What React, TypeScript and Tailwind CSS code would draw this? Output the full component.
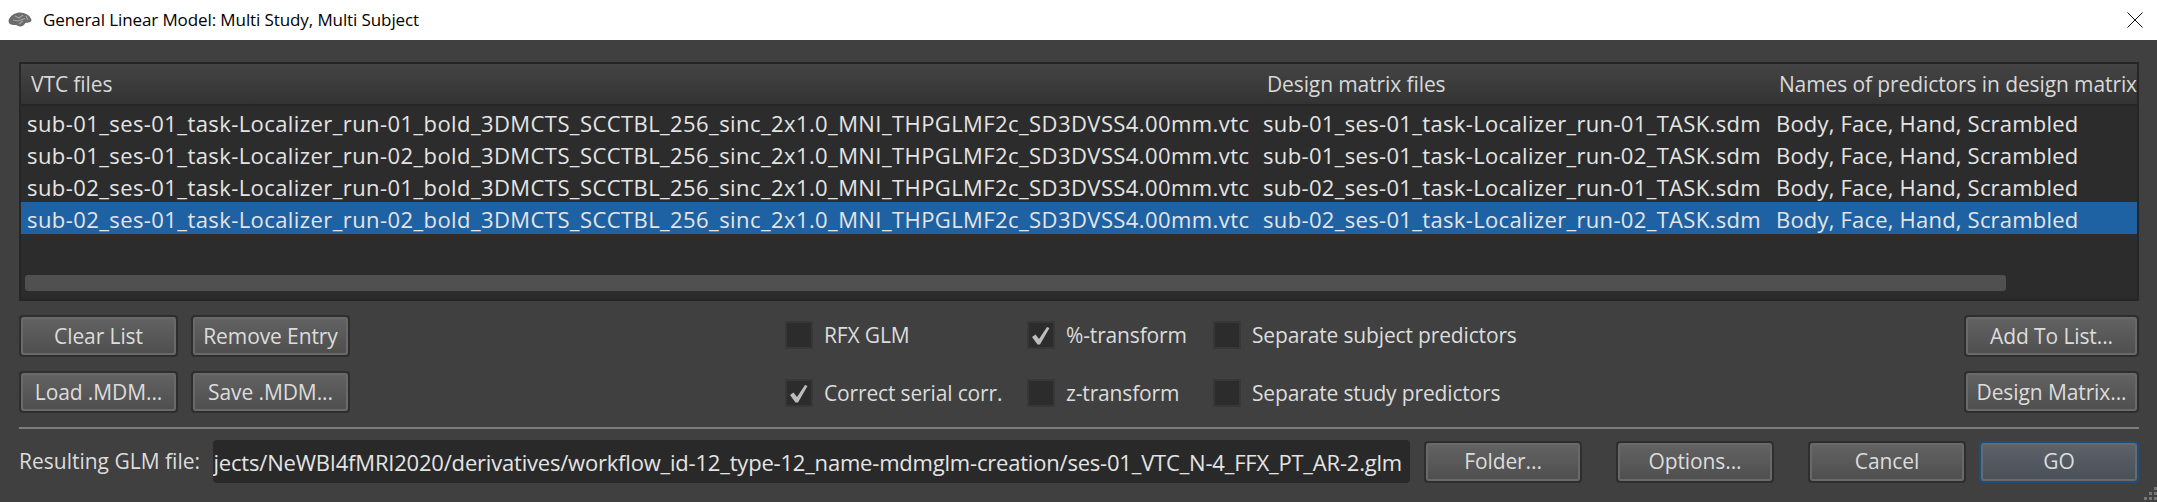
const vtc = "_bold_3DMCTS_SCCTBL_256_sinc_2x1.0_MNI_THPGLMF2c_SD3DVSS4.00mm.vtc";
const rows = [
  { id: "sub-01_ses-01_task-Localizer_run-01", selected: false },
  { id: "sub-01_ses-01_task-Localizer_run-02", selected: false },
  { id: "sub-02_ses-01_task-Localizer_run-01", selected: false },
  { id: "sub-02_ses-01_task-Localizer_run-02", selected: true },
];

function Btn({ label, go, w }: { label: string; go?: boolean; w: string }) {
  return (
    <div className={`${w} h-[42px] shrink-0 rounded-[4px] border-2 ${go ? "border-[#1c4f80]" : "border-[#2e2e2e]"}`}>
      <div className={`h-full flex items-center justify-center pt-px rounded-[3px] border-2 border-[#696969] whitespace-nowrap tracking-[-0.1px] text-[#dcdcdc] bg-gradient-to-b ${go ? "from-[#5c6268] to-[#4a5058]" : "from-[#626262] to-[#4f4f4f]"}`}>
        {label}
      </div>
    </div>
  );
}

function Check({ label, on, w }: { label: string; on?: boolean; w: string }) {
  return (
    <div className={`${w} flex items-center gap-[11px]`}>
      <div className="w-7 h-7 shrink-0 bg-[#2c2c2c] border-2 border-[#373737] flex items-center justify-center">
        {on && (
          <svg width="24" height="24" viewBox="0 0 24 24" fill="#bcbcbc">
            <path d="M3 14 L6.5 11.5 L10 16 L18 4 L20.5 5 L11 21.5 L8.5 21.5 Z" />
          </svg>
        )}
      </div>
      <span className="whitespace-nowrap pt-px tracking-[-0.15px] text-[#dcdcdc]">{label}</span>
    </div>
  );
}

export default function App() {
  return (
    <div className="w-[2157px] h-[502px] overflow-hidden relative flex flex-col bg-[#404040] text-[21px] font-['Open_Sans',sans-serif]">
      {/* title bar */}
      <div className="h-10 shrink-0 bg-white flex items-center pl-2 pr-[14px] text-[17px] tracking-[-0.1px] text-black">
        <svg width="24" height="16" viewBox="0 0 24 16" className="shrink-0">
          <path d="M0.5 9 C1 5 5 1.5 10 0.7 C16 0 22 3 23.5 8 C23.5 10.5 20 10.5 17.5 11 C16 13.5 13 15.5 10.5 14 C8 12 5 13.5 3 12.5 C1.5 12 0.5 10.5 0.5 9 Z" fill="#6c6c6c" />
          <path d="M7 4 L11 6 L15 3 M5 8 L10 9 L17 6.5 M11 12 L15 9 M18 4 L20 8" stroke="#a4a4a4" strokeWidth="1.2" fill="none" />
        </svg>
        <span className="ml-[11px]">General Linear Model: Multi Study, Multi Subject</span>
        <svg width="16" height="16" viewBox="0 0 16 16" className="ml-auto">
          <path d="M0.5 0.5 L15.5 15.5 M15.5 0.5 L0.5 15.5" stroke="#111" strokeWidth="1" />
        </svg>
      </div>

      <div className="flex-1 flex flex-col pl-[19px] pr-[18px] pt-[22px]">
        {/* file table */}
        <div className="h-[239px] shrink-0 border-2 border-[#262626] bg-[#2c2c2c] flex flex-col">
          <div className="h-[42px] shrink-0 flex items-center pt-px tracking-[-0.1px] text-[#d8d8d8] bg-gradient-to-b from-[#444444] to-[#333333] border-b-2 border-[#262626]">
            <span className="w-[1246px] pl-[10px]">VTC files</span>
            <span className="w-[512px]">Design matrix files</span>
            <span className="whitespace-nowrap">Names of predictors in design matrix</span>
          </div>
          {rows.map((r) => (
            <div key={r.id + r.selected} className={`h-8 shrink-0 flex items-center pt-[3px] text-[22px] whitespace-nowrap text-[#e4e4e4] ${r.selected ? "bg-[#1f62a3]" : ""}`}>
              <span className="w-[1242px] pl-[6px] shrink-0 tracking-[0.42px]">{r.id + vtc}</span>
              <span className="w-[513px] shrink-0 tracking-[0.34px]">{r.id + "_TASK.sdm"}</span>
              <span className="tracking-[0.2px]">Body, Face, Hand, Scrambled</span>
            </div>
          ))}
          <div className="h-4 w-[1981px] ml-1 mt-[41px] rounded-[3px] bg-[#505050]" />
        </div>

        {/* controls */}
        <div className="mt-[14px] h-[98px] shrink-0 flex">
          <div className="w-[331px] shrink-0 grid grid-cols-2 gap-x-[13px] gap-y-[14px]">
            <Btn label="Clear List" w="w-[159px]" />
            <Btn label="Remove Entry" w="w-[159px]" />
            <Btn label="Load .MDM..." w="w-[159px]" />
            <Btn label="Save .MDM..." w="w-[159px]" />
          </div>
          <div className="ml-[435px] grid grid-cols-[242px_186px_auto] content-center gap-y-[26px]">
            <Check label="RFX GLM" w="w-[242px]" />
            <Check label="%-transform" on w="w-[186px]" />
            <Check label="Separate subject predictors" w="w-auto" />
            <Check label="Correct serial corr." on w="w-[242px]" />
            <Check label="z-transform" w="w-[186px]" />
            <Check label="Separate study predictors" w="w-auto" />
          </div>
          <div className="ml-auto flex flex-col gap-[14px]">
            <Btn label="Add To List..." w="w-[175px]" />
            <Btn label="Design Matrix..." w="w-[175px]" />
          </div>
        </div>

        <div className="mt-[14px] h-0.5 shrink-0 bg-[#7c7c7c]" />

        {/* result file row */}
        <div className="mt-[11px] h-[43px] shrink-0 flex items-center">
          <span className="w-[194px] shrink-0 pt-px text-[#dcdcdc] whitespace-nowrap">Resulting GLM file:</span>
          <div className="w-[1197px] h-full shrink-0 rounded-[4px] bg-[#292929] flex justify-end items-center overflow-hidden pr-2 pt-px text-[22px] tracking-[-0.2px] whitespace-nowrap text-[#e4e4e4]">
            <span>ojects/NeWBI4fMRI2020/derivatives/workflow_id-12_type-12_name-mdmglm-creation/ses-01_VTC_N-4_FFX_PT_AR-2.glm</span>
          </div>
          <div className="ml-[14px]"><Btn label="Folder..." w="w-[158px]" /></div>
          <div className="ml-[34px]"><Btn label="Options..." w="w-[158px]" /></div>
          <div className="ml-[34px]"><Btn label="Cancel" w="w-[158px]" /></div>
          <div className="ml-[13px]"><Btn label="GO" go w="w-[160px]" /></div>
        </div>
      </div>

      {/* resize grip */}
      <svg width="20" height="15" viewBox="0 0 20 15" className="absolute right-0 bottom-0" fill="#767676">
        <rect x="17" y="0" width="3" height="3" />
        <rect x="12" y="5" width="3" height="3" /><rect x="17" y="5" width="3" height="3" />
        <rect x="7" y="10" width="3" height="3" /><rect x="12" y="10" width="3" height="3" /><rect x="17" y="10" width="3" height="3" />
      </svg>
    </div>
  );
}
